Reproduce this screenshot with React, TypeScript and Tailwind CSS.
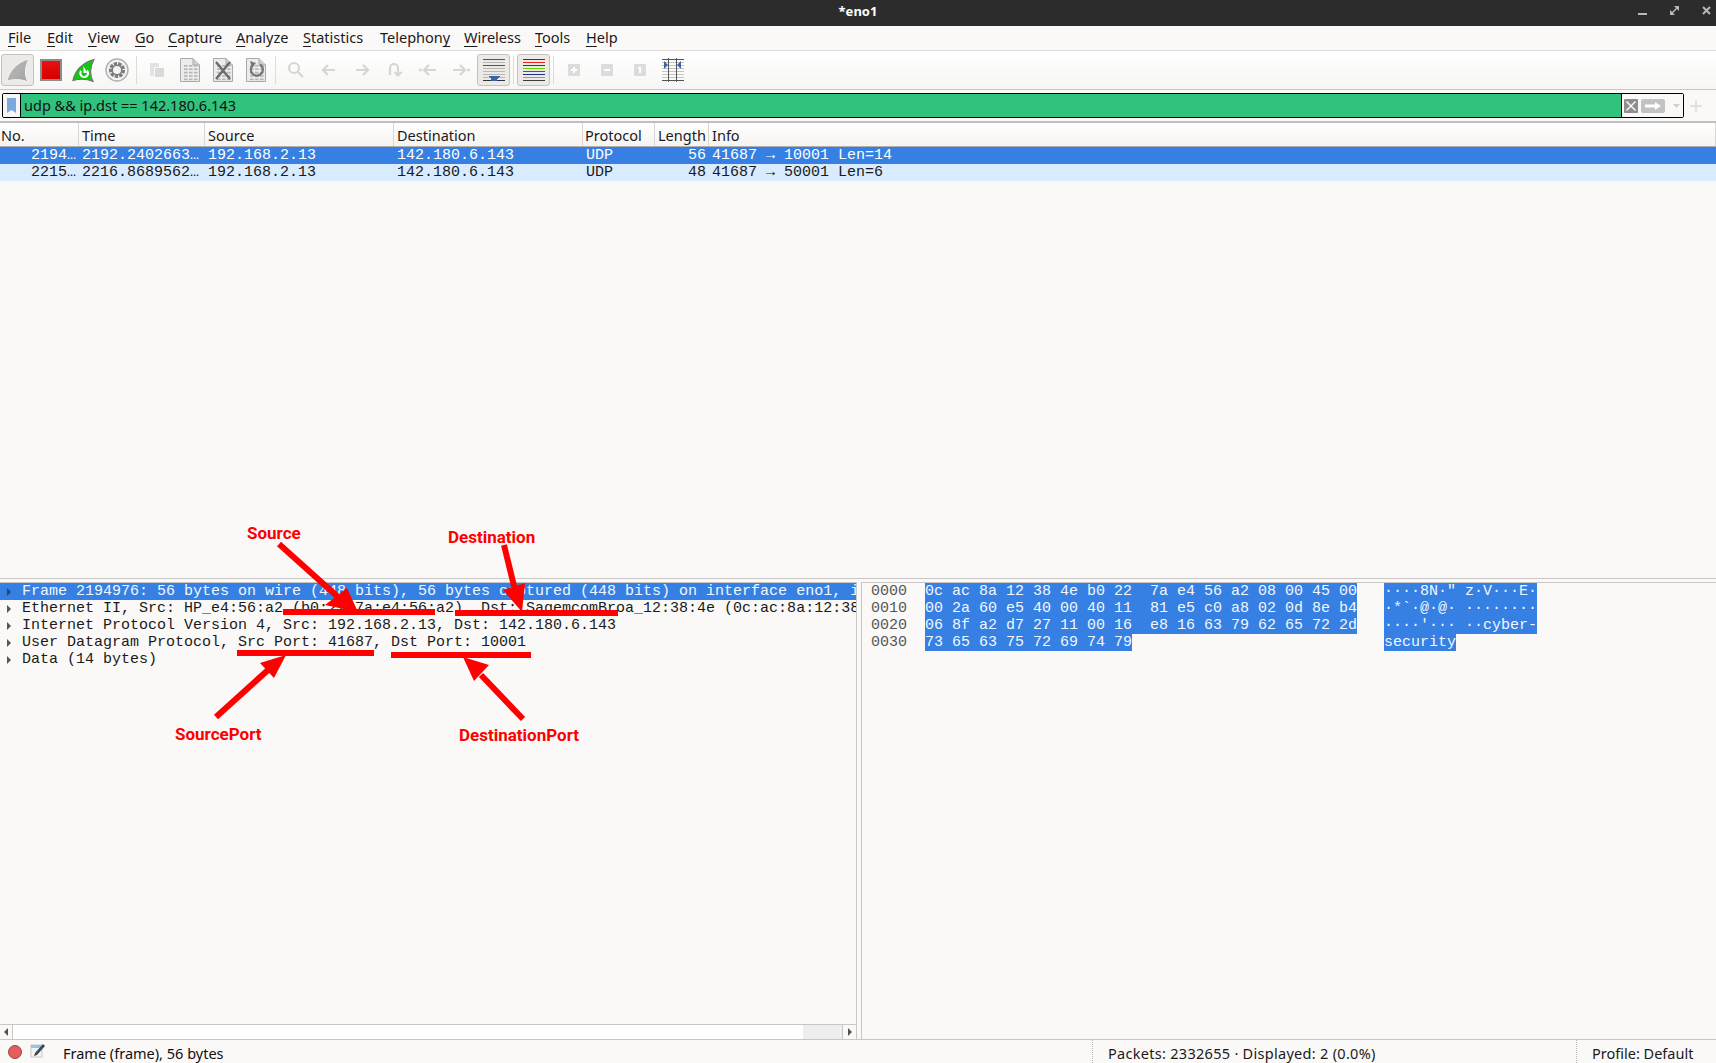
import React from "react";

const ui = "font-['Noto_Sans',sans-serif]";
const mono = "font-['Liberation_Mono',monospace]";

function Menu({ k, rest, cls }: { k: string; rest: string; cls: string }) {
  return (
    <span className={cls}>
      <span className="underline decoration-1 underline-offset-[3px]">{k}</span>
      {rest}
    </span>
  );
}

function Doc({ children }: { children?: React.ReactNode }) {
  const dots: React.ReactNode[] = [];
  for (let r = 0; r < 6; r++)
    for (let c = 0; c < 3; c++)
      dots.push(<rect key={r + "-" + c} x={4 + c * 5} y={7 + r * 3.4} width="3.6" height="1.6" fill="#b5b5b5" />);
  return (
    <svg width="20" height="24" viewBox="0 0 20 24">
      <path d="M.5.5H13L19.5 7V23.5H.5Z" fill="#ececec" stroke="#aaa" />
      <path d="M13 .5V7H19.5" fill="#d0d0d0" stroke="#aaa" />
      {dots}
      {children}
    </svg>
  );
}

function Nav({ d, dot }: { d: string; dot?: number }) {
  return (
    <svg width="20" height="20" viewBox="0 0 20 20" fill="none" stroke="#d6d6d6" strokeWidth="2.2">
      <path d={d} />
      {dot !== undefined && <circle cx={dot} cy="10" r="1.6" fill="#d6d6d6" stroke="none" />}
    </svg>
  );
}

function Slot({ children, cls = "" }: { children?: React.ReactNode; cls?: string }) {
  return <div className={"w-[33px] h-[32px] flex items-center justify-center shrink-0 " + cls}>{children}</div>;
}

const Sep = () => (
  <div className="w-[7px] flex justify-center shrink-0">
    <div className="w-px h-[28px] bg-[#dcdcdc]" />
  </div>
);

const Pressed = "rounded-[3px] border border-[#c4c2be] bg-[#eceae7]";

function Square({ children }: { children: React.ReactNode }) {
  return (
    <svg width="12" height="12" viewBox="0 0 12 12">
      <rect width="12" height="12" rx="1" fill="#dcdcdc" />
      {children}
    </svg>
  );
}

const tree = [
  "Frame 2194976: 56 bytes on wire (448 bits), 56 bytes captured (448 bits) on interface eno1, id 0",
  "Ethernet II, Src: HP_e4:56:a2 (b0:22:7a:e4:56:a2), Dst: SagemcomBroa_12:38:4e (0c:ac:8a:12:38:4e)",
  "Internet Protocol Version 4, Src: 192.168.2.13, Dst: 142.180.6.143",
  "User Datagram Protocol, Src Port: 41687, Dst Port: 10001",
  "Data (14 bytes)",
];

const hex = [
  ["0000", "0c ac 8a 12 38 4e b0 22  7a e4 56 a2 08 00 45 00", '····8N·" z·V···E·'],
  ["0010", "00 2a 60 e5 40 00 40 11  81 e5 c0 a8 02 0d 8e b4", "·*`·@·@· ········"],
  ["0020", "06 8f a2 d7 27 11 00 16  e8 16 63 79 62 65 72 2d", "····'··· ··cyber-"],
  ["0030", "73 65 63 75 72 69 74 79", "security"],
];

const cols = "grid grid-cols-[79px_126px_189px_189px_72px_54px_1fr]";
const headers = ["No.", "Time", "Source", "Destination", "Protocol", "Length", "Info"];
const rows = [
  ["2194…", "2192.2402663…", "192.168.2.13", "142.180.6.143", "UDP", "56", "41687 → 10001 Len=14"],
  ["2215…", "2216.8689562…", "192.168.2.13", "142.180.6.143", "UDP", "48", "41687 → 50001 Len=6"],
];

function Tri({ color = "#555", dir = "r" }: { color?: string; dir?: "r" | "l" }) {
  return (
    <svg width="6" height="8" viewBox="0 0 6 8">
      <path d={dir === "r" ? "M1 0L5 4L1 8Z" : "M5 0L1 4L5 8Z"} fill={color} />
    </svg>
  );
}

export default function App() {
  const annot = "absolute font-['Roboto',sans-serif] font-bold text-[17px] leading-[18px] text-[#fe0000] whitespace-nowrap";
  return (
    <div className={"relative w-[1716px] h-[1063px] overflow-hidden flex flex-col bg-[#faf9f8] text-[#1a1a1a] " + ui}>
      {/* title bar */}
      <div className="h-[26px] bg-[#2c2c2c] relative shrink-0">
        <div className="text-center text-white font-bold text-[13px] leading-[22px]">*eno1</div>
        <div className="absolute right-[5px] top-[6px] flex gap-[23px] items-center">
          <svg width="9" height="9" viewBox="0 0 9 9"><rect y="7" width="9" height="2" fill="#b9b9b9" /></svg>
          <svg width="9" height="9" viewBox="0 0 9 9"><path d="M4 0H9V5L7 3L3 7L5 9H0V4L2 6L6 2Z" fill="#b9b9b9" /></svg>
          <svg width="9" height="9" viewBox="0 0 9 9"><path d="M1 1L8 8M8 1L1 8" stroke="#b9b9b9" strokeWidth="2" /></svg>
        </div>
      </div>
      {/* menu */}
      <div className="h-[25px] border-b border-[#dedddb] flex items-start pl-[8px] text-[14.5px] leading-[22px] shrink-0">
        <Menu k="F" rest="ile" cls="w-[39px]" />
        <Menu k="E" rest="dit" cls="w-[41px]" />
        <Menu k="V" rest="iew" cls="w-[47px]" />
        <Menu k="G" rest="o" cls="w-[33px]" />
        <Menu k="C" rest="apture" cls="w-[68px]" />
        <Menu k="A" rest="nalyze" cls="w-[67px]" />
        <Menu k="S" rest="tatistics" cls="w-[77px]" />
        <span className="w-[84px]">Telephon<span className="underline decoration-1 underline-offset-[3px]">y</span></span>
        <Menu k="W" rest="ireless" cls="w-[71px]" />
        <Menu k="T" rest="ools" cls="w-[51px]" />
        <Menu k="H" rest="elp" cls="" />
      </div>
      {/* toolbar */}
      <div className="h-[39px] border-b border-[#c8c7c5] flex items-center pl-[1px] bg-gradient-to-b from-white to-[#f7f6f4] shrink-0">
        <Slot cls={Pressed}>
          <svg width="24" height="24" viewBox="0 0 24 24">
            <defs>
              <linearGradient id="fin" x1="0" y1="0" x2="1" y2="1">
                <stop offset="0" stopColor="#bdbdbd" />
                <stop offset="1" stopColor="#a2a2a2" />
              </linearGradient>
            </defs>
            <path d="M1 23 C3 13 11 4 23 1 C19 8 18 17 22 24 C15 21 8 21 1 23 Z" fill="url(#fin)" stroke="#f4f4f4" strokeWidth="1" />
          </svg>
        </Slot>
        <Slot>
          <div className="w-[22px] h-[22px] bg-gradient-to-b from-[#ea1010] to-[#d40000] border-2 border-[#8c8c8c]" />
        </Slot>
        <Slot>
          <svg width="23" height="24" viewBox="0 0 24 24">
            <path d="M1 23 C3 13 11 4 23 1 C19 8 18 17 22 24 C15 21 8 21 1 23 Z" fill="#12c912" stroke="#707070" strokeWidth="1.2" />
            <path d="M15.5 12.5 A4 4 0 1 1 9.5 13" fill="none" stroke="#fff" strokeWidth="2.2" />
            <path d="M12 8V15H16Z" fill="#fff" />
          </svg>
        </Slot>
        <Slot>
          <svg width="24" height="24" viewBox="0 0 24 24">
            <circle cx="12" cy="12" r="11" fill="#f4f4f4" stroke="#b0b0b0" strokeWidth="1.4" />
            <circle cx="12" cy="12" r="6.6" fill="none" stroke="#7c7c7c" strokeWidth="3" strokeDasharray="3.4 1.2" />
            <circle cx="12" cy="12" r="4.8" fill="none" stroke="#7c7c7c" strokeWidth="1.6" />
          </svg>
        </Slot>
        <Sep />
        <Slot>
          <svg width="16" height="16" viewBox="0 0 16 16">
            <path d="M1 1H10V5H5V14H1Z" fill="#e2e2e2" />
            <rect x="6" y="6" width="9" height="9" fill="#dadada" />
          </svg>
        </Slot>
        <Slot><Doc /></Slot>
        <Slot>
          <Doc>
            <path d="M3 4L17 21M17 4L3 21" stroke="#6b6b6b" strokeWidth="2.4" />
          </Doc>
        </Slot>
        <Slot>
          <Doc>
            <path d="M14 6.5A6 6 0 1 1 7 7" fill="none" stroke="#777" strokeWidth="2.2" />
            <path d="M4 3L10 5L6 10Z" fill="#777" />
          </Doc>
        </Slot>
        <Sep />
        <Slot>
          <svg width="18" height="18" viewBox="0 0 18 18" fill="none" stroke="#d6d6d6" strokeWidth="2.2">
            <circle cx="7" cy="7" r="5" />
            <path d="M11 11L16 16" />
          </svg>
        </Slot>
        <Slot><Nav d="M16 10H4M9 5L4 10L9 15" /></Slot>
        <Slot><Nav d="M4 10H16M11 5L16 10L11 15" /></Slot>
        <Slot><Nav d="M5 15V8A4 4 0 0 1 13 8V15M9.5 12L13 15.5L16.5 12" /></Slot>
        <Slot><Nav d="M18 10H7M11 5L6 10L11 15" dot={2.5} /></Slot>
        <Slot><Nav d="M2 10H13M9 5L14 10L9 15" dot={17.5} /></Slot>
        <Slot cls={Pressed}>
          <svg width="22" height="24" viewBox="0 0 22 24" shapeRendering="crispEdges">
            {[1, 7].map((y) => <rect key={y} y={y} width="22" height="1" fill="#555" />)}
            {[4, 10, 13, 16, 19].map((y) => <rect key={y} y={y} width="22" height="1" fill="#b8b8b8" />)}
            <rect y="22" width="22" height="1" fill="#333" />
            <path d="M5 18H17L14 21V23H8V21Z" fill="#3b65a5" />
          </svg>
        </Slot>
        <Sep />
        <Slot cls={Pressed}>
          <svg width="22" height="22" viewBox="0 0 22 22" shapeRendering="crispEdges">
            {["#3c3c3c", "#ee2020", "#3c3c3c", "#66d800", "#3a4ac8", "#2c2c80", "#c89a20", "#3c3c3c"].map((c, i) => (
              <rect key={i} y={i * 3} width="22" height="1" fill={c} />
            ))}
          </svg>
        </Slot>
        <Sep />
        <Slot><Square><path d="M6 3V9M3 6H9" stroke="#fff" strokeWidth="2" /></Square></Slot>
        <Slot><Square><path d="M3 6H9" stroke="#fff" strokeWidth="2" /></Square></Slot>
        <Slot><Square><path d="M6 3V9M4.5 4.5L6 3" stroke="#fff" strokeWidth="2" /></Square></Slot>
        <Slot>
          <svg width="22" height="24" viewBox="0 0 22 24">
            {[1, 4, 7, 10, 13, 16, 19, 22].map((y) => (
              <rect key={y} y={y} width="22" height="1" fill={y === 1 || y === 22 ? "#555" : "#c4c4c4"} />
            ))}
            <rect x="6" width="1" height="24" fill="#555" />
            <rect x="14" width="1" height="24" fill="#555" />
            <path d="M2 3L6 7L2 11Z" fill="#3b65a5" />
            <path d="M19 3L15 7L19 11Z" fill="#3b65a5" />
          </svg>
        </Slot>
      </div>
      {/* filter */}
      <div className="h-[31px] flex items-center pl-[2px] bg-[#faf9f8] shrink-0">
        <div className="w-[1682px] h-[25px] border border-black rounded-[2px] flex items-stretch overflow-hidden bg-white">
          <div className="w-[18px] border-r border-black flex items-center justify-center bg-[#f6f6f6]">
            <svg width="9" height="15" viewBox="0 0 9 15"><path d="M0 0H9V15L4.5 12L0 15Z" fill="#7ea7dc" /></svg>
          </div>
          <div className="flex-1 bg-[#31c27e] text-[14.5px] leading-[23px] pl-[3px] text-[#111]">udp &amp;&amp; ip.dst == 142.180.6.143</div>
          <div className="w-[62px] border-l border-black bg-[#faf9f8] flex items-center pl-[2px]">
            <svg width="14" height="14" viewBox="0 0 14 14">
              <rect width="14" height="14" rx="1" fill="#8e8e8e" />
              <path d="M2.5 2.5L11.5 11.5M11.5 2.5L2.5 11.5" stroke="#fff" strokeWidth="1.4" />
            </svg>
            <svg className="ml-[3px]" width="24" height="14" viewBox="0 0 24 14">
              <rect width="24" height="14" rx="2" fill="#c2c2c2" />
              <path d="M4 5.5H14V3L20 7L14 11V8.5H4Z" fill="#fff" />
            </svg>
            <svg className="ml-[8px]" width="7" height="4" viewBox="0 0 7 4"><path d="M0 0H7L3.5 4Z" fill="#d0d0d0" /></svg>
          </div>
        </div>
        <svg className="ml-[6px]" width="12" height="12" viewBox="0 0 12 12"><path d="M6 0V12M0 6H12" stroke="#dcdcdc" strokeWidth="1.6" /></svg>
      </div>
      <div className="h-[2px] bg-[#c0bfbd] shrink-0" />
      {/* packet list */}
      <div className="flex-1 min-h-0">
        <div className={cols + " h-[24px] bg-gradient-to-b from-white to-[#f5f4f2] border-b border-[#b0afad] text-[14.5px] leading-[24px]"}>
          {headers.map((h, i) => (
            <div key={h} className={"border-r border-[#d8d7d5] overflow-hidden whitespace-nowrap " + (i === 0 ? "pl-[1px]" : i === 4 ? "pl-[2px]" : "pl-[3px]")}>
              {h}
            </div>
          ))}
        </div>
        {rows.map((r, ri) => (
          <div key={r[0]} className={cols + " h-[17px] text-[15px] leading-[17px] whitespace-pre " + mono + " " + (ri === 0 ? "bg-[#3580e2] text-white" : "bg-[#d8ebff] text-[#1a1a1a]")}>
            {r.map((c, i) => (
              <div key={i} className={i === 0 || i === 5 ? "text-right pr-[3px]" : "pl-[3px]"}>{c}</div>
            ))}
          </div>
        ))}
      </div>
      {/* splitter */}
      <div className="h-[4px] border-t border-[#c8c7c5] shrink-0" />
      {/* lower panes */}
      <div className="h-[458px] flex border-b border-[#c8c7c5] shrink-0">
        <div className="w-[857px] border-r border-t border-[#c8c7c5] flex flex-col">
          <div className={"flex-1 min-h-0 overflow-hidden text-[15px] leading-[17px] whitespace-pre " + mono}>
            {tree.map((t, i) => (
              <div key={i} className={"h-[17px] flex items-center " + (i === 0 ? "bg-[#3580e2] text-[#f2f7ff]" : "")}>
                <div className="w-[22px] pl-[6px] flex shrink-0"><Tri color={i === 0 ? "#23456f" : "#555"} /></div>
                <span>{t}</span>
              </div>
            ))}
          </div>
          <div className="h-[15px] border-t border-[#c8c7c5] bg-white flex items-stretch">
            <div className="w-[13px] border-r border-[#c8c7c5] flex items-center justify-center bg-[#faf9f8]"><Tri dir="l" /></div>
            <div className="flex-1" />
            <div className="w-[39px] bg-[#eeeeee]" />
            <div className="w-[14px] border-l border-[#c8c7c5] flex items-center justify-center bg-[#faf9f8]"><Tri /></div>
          </div>
        </div>
        <div className="ml-[4px] flex-1 border-l border-t border-[#c8c7c5] pl-[9px]">
          {hex.map((h) => (
            <div key={h[0]} className={"h-[17px] flex text-[15px] leading-[17px] whitespace-pre " + mono}>
              <span className="w-[54px] text-[#555]">{h[0]}</span>
              <span className="w-[459px]"><span className="inline-block h-[17px] bg-[#3580e2] text-[#f2f7ff]">{h[1]}</span></span>
              <span className="inline-block h-[17px] bg-[#3580e2] text-[#f2f7ff]">{h[2]}</span>
            </div>
          ))}
        </div>
      </div>
      {/* status */}
      <div className="h-[23px] flex items-center text-[14.5px] leading-[26px] shrink-0">
        <div className="w-[8px]" />
        <div className="w-[14px] h-[14px] rounded-full bg-[#e85c5c] border border-[#8c4a4a]" />
        <svg className="ml-[8px] mb-[2px]" width="15" height="15" viewBox="0 0 15 15">
          <rect x="1" y="2" width="11" height="12" fill="#f4f4f4" stroke="#c8c8c8" />
          <rect x="1" y="2" width="11" height="3" fill="#8ec7e8" />
          <path d="M5 10L13 1L15 3L7 12L4 13Z" fill="#3d4a52" />
        </svg>
        <span className="ml-[18px] w-[1029px] text-[#111] h-[23px]">Frame (frame), 56 bytes</span>
        <div className="h-[23px] border-l border-dotted border-[#bbb] pl-[15px] w-[484px] tracking-[0.29px]">Packets: 2332655 · Displayed: 2 (0.0%)</div>
        <div className="h-[23px] border-l border-dotted border-[#bbb] pl-[15px]">Profile: Default</div>
      </div>

      {/* annotations over the screenshot */}
      <svg className="absolute inset-0 pointer-events-none" width="1716" height="1063" viewBox="0 0 1716 1063">
        <g fill="#fe0000" stroke="none">
          <rect x="283" y="609" width="152" height="6" />
          <rect x="455" y="610" width="163" height="6" />
          <rect x="237" y="650" width="137" height="6" />
          <rect x="391" y="652" width="140" height="6" />
          <path d="M358 612L347 588L325 605Z" />
          <path d="M522 612L525 583L503 590Z" />
          <path d="M286 655L260 663L274 678Z" />
          <path d="M463 657L489 665L474 681Z" />
        </g>
        <g stroke="#fe0000" strokeWidth="6" fill="none">
          <path d="M279 544L338 597" />
          <path d="M504 545L515 590" />
          <path d="M216 717L268 670" />
          <path d="M523 719L481 675" />
        </g>
      </svg>
      <div className={annot + " left-[247px] top-[524px]"}>Source</div>
      <div className={annot + " left-[448px] top-[528px]"}>Destination</div>
      <div className={annot + " left-[175px] top-[725px]"}>SourcePort</div>
      <div className={annot + " left-[459px] top-[726px]"}>DestinationPort</div>
    </div>
  );
}
